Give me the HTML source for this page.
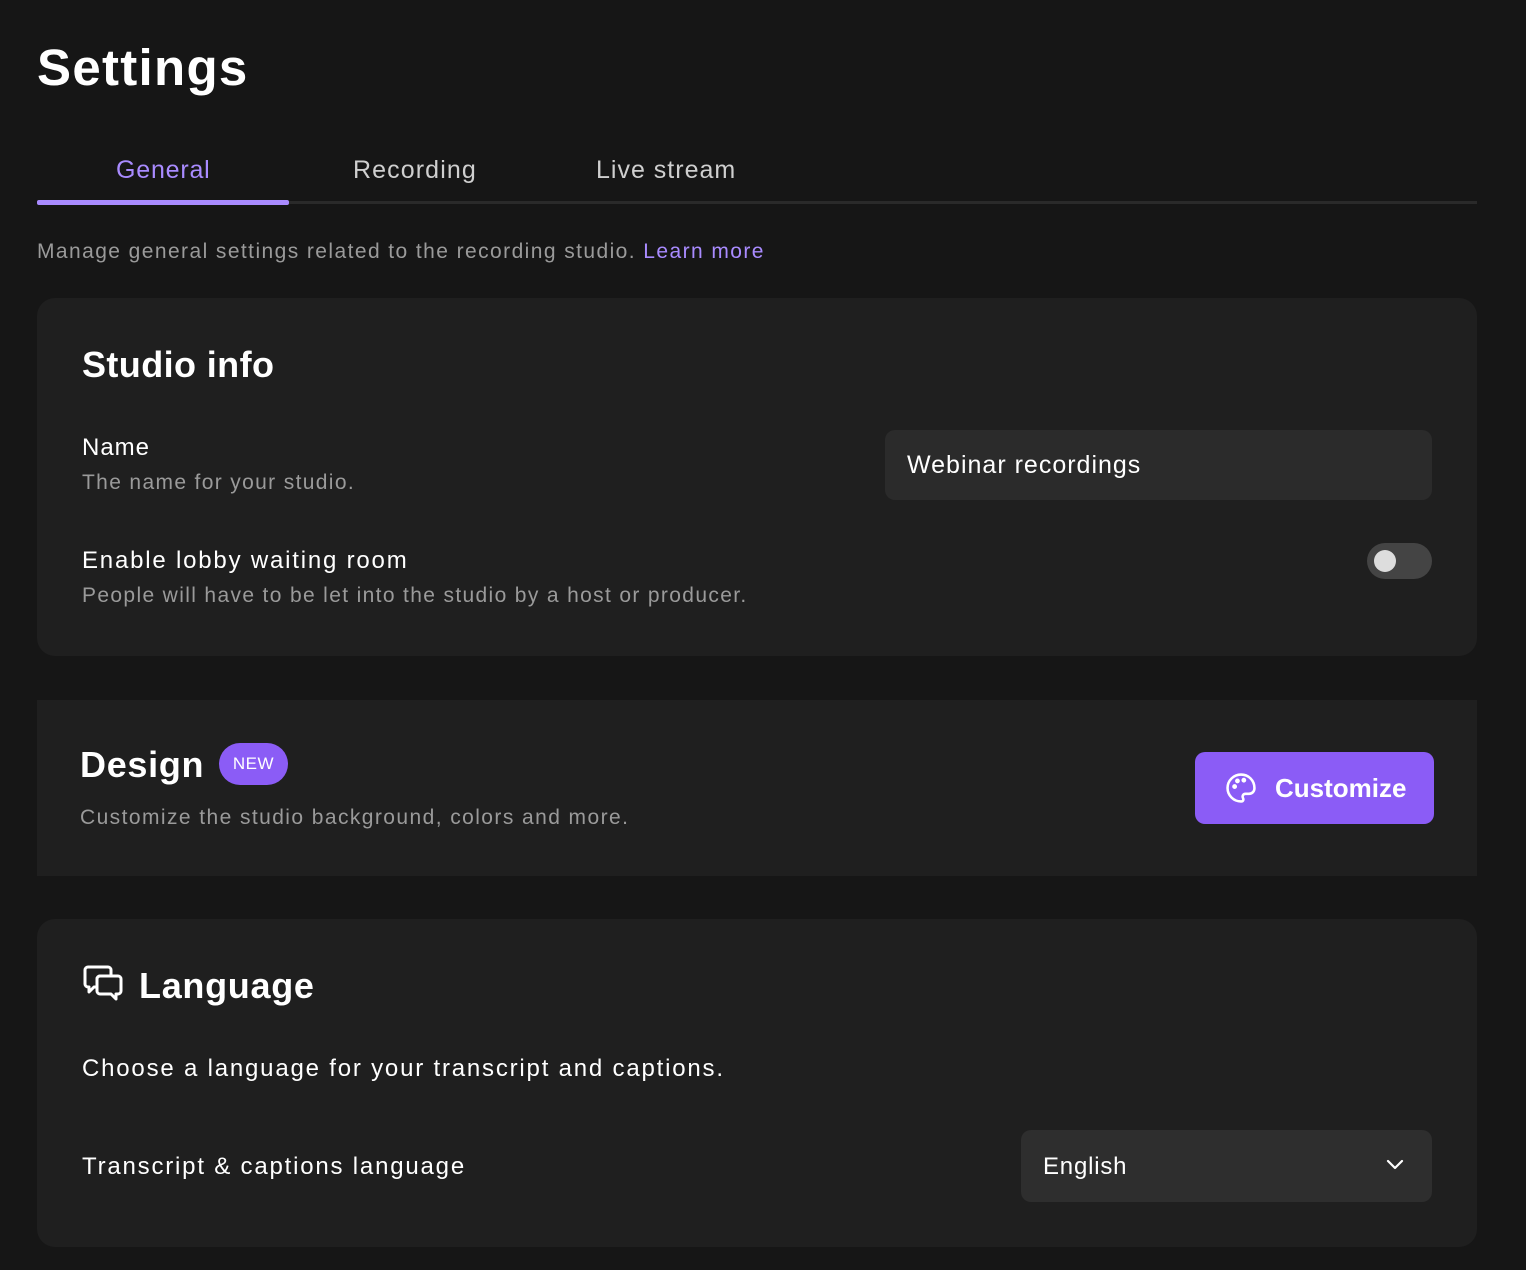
<!DOCTYPE html>
<html><head><style>
*{margin:0;padding:0;box-sizing:border-box}
body{width:1526px;height:1270px;background:#161616;font-family:"Liberation Sans",sans-serif;color:#fff;position:relative;overflow:hidden}
.a{position:absolute;white-space:nowrap}
.card{position:absolute;left:37px;width:1440px;background:#1f1f1f;border-radius:18px}
.g{color:#9a9a9a}
</style></head><body>
<div class="a" style="left:37px;top:38px;font-size:51px;font-weight:bold;letter-spacing:1.3px">Settings</div>
<div class="a" style="left:116px;top:156px;font-size:25px;color:#a98bff;letter-spacing:0.8px">General</div>
<div class="a" style="left:353px;top:156px;font-size:25px;color:#cfcfcf;letter-spacing:1.1px">Recording</div>
<div class="a" style="left:596px;top:156px;font-size:25px;color:#cfcfcf;letter-spacing:1px">Live stream</div>
<div class="a" style="left:37px;top:201px;width:1440px;height:3px;background:#2a2a2a"></div>
<div class="a" style="left:37px;top:200px;width:252px;height:5px;background:#a98bff;border-radius:2px"></div>
<div class="a g" style="left:37px;top:240px;font-size:21px;letter-spacing:1.42px">Manage general settings related to the recording studio. <span style="color:#a98bff">Learn more</span></div>

<div class="card" style="top:298px;height:358px">
<div class="a" style="left:45px;top:46px;font-size:36px;font-weight:bold;letter-spacing:0.4px">Studio info</div>
<div class="a" style="left:45px;top:136px;font-size:24px;letter-spacing:1px">Name</div>
<div class="a g" style="left:45px;top:173px;font-size:21px;letter-spacing:1.35px">The name for your studio.</div>
<div class="a" style="left:848px;top:132px;width:547px;height:70px;background:#2b2b2b;border-radius:10px;font-size:25px;padding:21px 22px;letter-spacing:1px">Webinar recordings</div>
<div class="a" style="left:45px;top:249px;font-size:24px;letter-spacing:1.8px">Enable lobby waiting room</div>
<div class="a g" style="left:45px;top:286px;font-size:21px;letter-spacing:1.35px">People will have to be let into the studio by a host or producer.</div>
<div class="a" style="left:1330px;top:245px;width:65px;height:36px;background:#444;border-radius:18px"><div class="a" style="left:7px;top:7px;width:22px;height:22px;border-radius:50%;background:#ddd"></div></div>
</div>

<div class="a" style="left:37px;top:700px;width:1440px;height:176px;background:#1f1f1f">
<div class="a" style="left:43px;top:44px;font-size:36px;font-weight:bold;letter-spacing:0.7px">Design</div>
<div class="a" style="left:182px;top:43px;width:69px;height:42px;border-radius:21px;background:#8b5cf6;font-size:17px;line-height:42px;text-align:center;letter-spacing:0.5px">NEW</div>
<div class="a g" style="left:43px;top:106px;font-size:21px;letter-spacing:1.42px">Customize the studio background, colors and more.</div>
<div class="a" style="left:1158px;top:52px;width:239px;height:72px;background:#8b5cf6;border-radius:10px">
<svg class="a" style="left:29px;top:19px" width="34" height="34" viewBox="0 0 24 24" fill="none" stroke="#fff" stroke-width="1.8" stroke-linecap="round" stroke-linejoin="round"><path d="M12 2.5a9.5 9.5 0 1 0 0 19c1.6 0 2-1.2 1.4-2.4-.7-1.4.1-3 1.8-3h2.4c2.3 0 3.9-1.7 3.9-4C21.5 6.5 17.2 2.5 12 2.5z"/><circle cx="7.5" cy="11" r=".8" fill="#fff"/><circle cx="9.5" cy="7" r=".8" fill="#fff"/><circle cx="14" cy="6.5" r=".8" fill="#fff"/></svg>
<div class="a" style="left:80px;top:21px;font-size:26px;font-weight:bold">Customize</div>
</div>
</div>

<div class="card" style="top:919px;height:328px">
<svg class="a" style="left:45px;top:45px" width="42" height="42" viewBox="0 0 42 42" fill="none" stroke="#fff" stroke-width="3" stroke-linejoin="round"><path d="M6 3h20a3 3 0 0 1 3 3v6H18a3 3 0 0 0-3 3v8H12l-5 5v-5H6a3 3 0 0 1-3-3V6a3 3 0 0 1 3-3z"/><path d="M18 12h18a3 3 0 0 1 3 3v12a3 3 0 0 1-3 3h-2v5l-5-5H18a3 3 0 0 1-3-3V15a3 3 0 0 1 3-3z"/></svg>
<div class="a" style="left:102px;top:46px;font-size:36px;font-weight:bold;letter-spacing:0.7px">Language</div>
<div class="a" style="left:45px;top:136px;font-size:24px;letter-spacing:1.8px">Choose a language for your transcript and captions.</div>
<div class="a" style="left:45px;top:234px;font-size:24px;letter-spacing:1.8px">Transcript &amp; captions language</div>
<div class="a" style="left:984px;top:211px;width:411px;height:72px;background:#2e2e2e;border-radius:10px;font-size:24px;padding:23px 22px;letter-spacing:0.8px">English
<svg class="a" style="left:365px;top:28px" width="18" height="12" viewBox="0 0 18 12" fill="none" stroke="#fff" stroke-width="2.2" stroke-linecap="round" stroke-linejoin="round"><path d="M2 3l7 7 7-7"/></svg></div>
</div>
</body></html>
